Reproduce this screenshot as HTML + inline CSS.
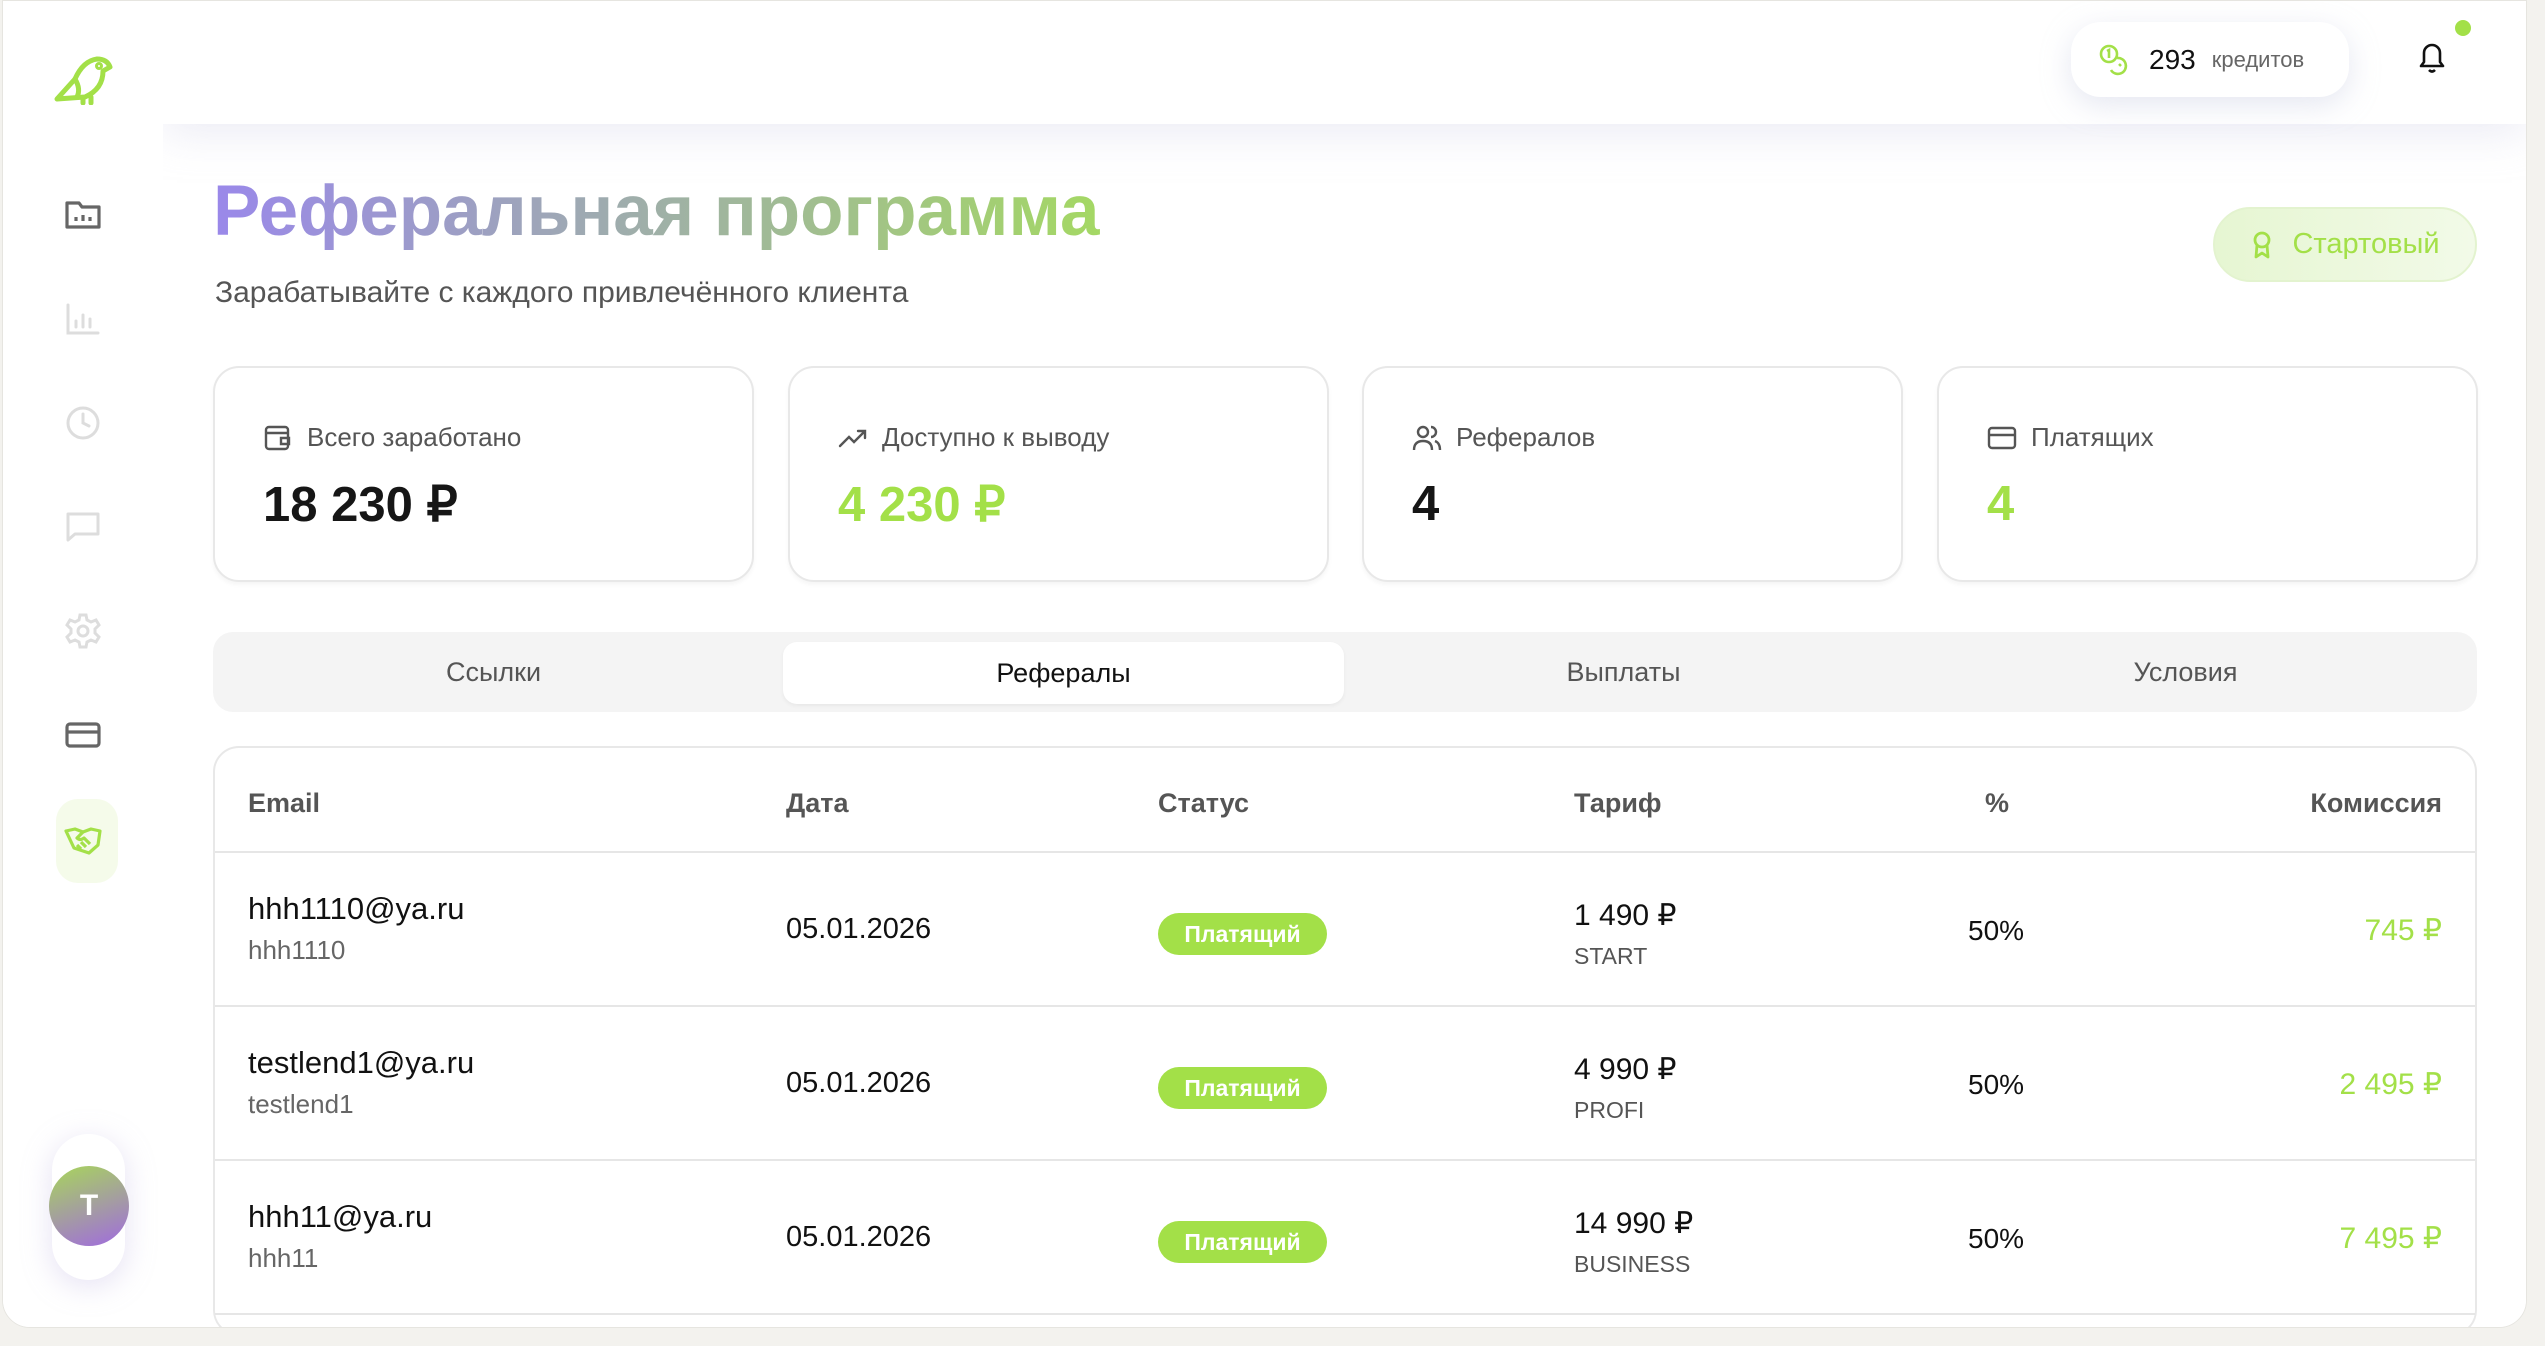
<!DOCTYPE html>
<html><head><meta charset="utf-8"><style>
*{box-sizing:border-box;margin:0;padding:0}
body{width:2545px;height:1346px;overflow:hidden;background:#f3f2ee;font-family:"Liberation Sans","Noto Sans CJK SC",sans-serif;position:relative}
.frame{position:absolute;left:2px;top:0;width:2525px;height:1328px;background:#fff;border-radius:0 0 28px 28px;overflow:hidden;border:1px solid #e6e5e0}
.side{position:absolute;left:0;top:0;width:160px;height:100%;background:#fff}
.main{position:absolute;left:160px;top:0;right:0;bottom:0;background:#fff}
.hdr{position:absolute;left:0;right:0;top:0;height:123px;background:#fff;box-shadow:0 10px 40px rgba(200,200,225,.35)}
.ico{position:absolute;left:60px;width:40px;height:40px}
.a{position:absolute}
.card{position:absolute;top:365px;width:541px;height:216px;border:2px solid #e8e8e8;border-radius:26px;background:#fff;box-shadow:0 3px 4px rgba(0,0,0,.04)}
.card .lb{position:absolute;left:48px;top:54px;font-size:26px;color:#555;display:flex;align-items:center;gap:14px}
.card .v{position:absolute;left:48px;top:108px;font-size:49px;font-weight:bold;color:#161616}
.g{color:#a3e048!important}
.tabs{position:absolute;left:214px;top:631px;width:2264px;height:80px;background:#f4f4f4;border-radius:20px}
.tab{position:absolute;top:0;height:80px;line-height:80px;font-size:27px;color:#555;text-align:center;width:561px}
.tab.on{top:10px;height:62px;line-height:62px;background:#fff;border-radius:14px;color:#111;box-shadow:0 2px 4px rgba(0,0,0,.05)}
.tbl{position:absolute;left:214px;top:745px;width:2264px;height:590px;border:2px solid #e8e8e8;border-radius:26px;background:#fff}
.th{position:absolute;top:40px;font-size:27px;font-weight:bold;color:#555}
.row{position:absolute;left:0;right:0;height:155px;border-top:2px solid #e6e6e6}
.em{position:absolute;left:33px;top:38px;font-size:31px;color:#111}
.sub{position:absolute;left:33px;top:82px;font-size:26px;color:#666}
.dt{position:absolute;left:571px;top:60px;font-size:29px;color:#111}
.bd{position:absolute;left:943px;top:60px;width:169px;height:42px;border-radius:21px;background:#a3e048;color:#fff;font-size:23px;font-weight:bold;text-align:center;line-height:42px}
.pr{position:absolute;left:1359px;top:45px;font-size:30px;color:#111}
.pl{position:absolute;left:1359px;top:90px;font-size:23px;color:#555}
.pc{position:absolute;left:1753px;top:62px;font-size:28px;color:#111}
.cm{position:absolute;right:33px;top:60px;font-size:30px;color:#a3e048}
</style></head><body>
<div class="frame">
<div class="main">
 <div class="hdr"></div>
</div>
<div class="side">
 <svg class="a" style="left:50px;top:48px" width="62" height="56" viewBox="0 0 62 56" fill="none" stroke="#a3e048" stroke-width="5" stroke-linecap="round" stroke-linejoin="round"><path d="M4 50 L22 30 Q30 12 44 10 Q54 10 57 18 L50 22 Q50 40 32 48 L4 50 Z"/><path d="M22 30 Q28 40 24 48"/><circle cx="46" cy="17" r="1.5"/><path d="M30 50v4M38 48v6"/></svg>
 <svg class="ico" style="top:194px" viewBox="0 0 40 40" fill="none" stroke="#666" stroke-width="3.2" stroke-linejoin="round"><path d="M4 8h12l3 4h17v20H4z"/><path d="M13 22v4M20 20v6M27 22v4"/></svg>
 <svg class="ico" style="top:298px" viewBox="0 0 40 40" fill="none" stroke="#ddd" stroke-width="3" stroke-linecap="round"><path d="M5 6v28h30M13 28v-6M20 28v-12M27 28v-8"/></svg>
 <svg class="ico" style="top:402px" viewBox="0 0 40 40" fill="none" stroke="#ddd" stroke-width="3" stroke-linecap="round"><circle cx="20" cy="20" r="15"/><path d="M20 11v9l6 3"/></svg>
 <svg class="ico" style="top:506px" viewBox="0 0 40 40" fill="none" stroke="#ddd" stroke-width="3" stroke-linejoin="round"><path d="M5 7h30v20H12l-7 6z"/></svg>
 <svg class="ico" style="top:610px" viewBox="0 0 40 40" fill="none" stroke="#ddd" stroke-width="3"><circle cx="20" cy="20" r="5"/><path d="M17 4h6l1 5 4 2 5-2 3 5-4 4v4l4 4-3 5-5-2-4 2-1 5h-6l-1-5-4-2-5 2-3-5 4-4v-4l-4-4 3-5 5 2 4-2z"/></svg>
 <svg class="ico" style="top:714px" viewBox="0 0 40 40" fill="none" stroke="#666" stroke-width="3.2"><rect x="4" y="9" width="32" height="22" rx="3"/><path d="M4 17h32"/></svg>
 <div class="a" style="left:53px;top:798px;width:62px;height:84px;border-radius:22px;background:#f5fbea"></div>
 <svg class="ico" style="top:820px" viewBox="0 0 40 40" fill="none" stroke="#a3e048" stroke-width="3.2" stroke-linejoin="round"><path d="M3 10l9-2 8 3 8-3 9 2-2 14-9 8-6-2-9-3z"/><path d="M20 11l-6 6q3 3 7 0l6 6M14 24l4 4M18 21l5 5"/></svg>
 <div class="a" style="left:49px;top:1133px;width:73px;height:146px;border-radius:36px;background:#fff;box-shadow:0 6px 30px rgba(180,170,220,.35)"></div>
 <div class="a" style="left:46px;top:1165px;width:80px;height:80px;border-radius:50%;background:linear-gradient(160deg,#a8d65a,#a06ae0);color:#fff;font-size:30px;font-weight:bold;text-align:center;line-height:80px">T</div>
</div>
<div class="a" style="left:2068px;top:21px;width:278px;height:75px;border-radius:30px;background:#fff;box-shadow:0 8px 30px rgba(180,185,215,.35);display:flex;align-items:center">
 <svg style="margin-left:28px" width="30" height="32" viewBox="0 0 30 32" fill="none" stroke="#a3e048" stroke-width="2.6"><circle cx="10" cy="10" r="8"/><path d="M8 7l2-1v8"/><path d="M18 14a8 8 0 1 1-6 12"/><path d="M20 20l2 2"/></svg>
 <span style="font-size:28px;color:#111;margin-left:20px">293</span><span style="font-size:22px;color:#666;margin-left:16px">кредитов</span>
</div>
<svg class="a" style="left:2414px;top:40px" width="30" height="36" viewBox="0 0 30 36" fill="none" stroke="#111" stroke-width="2.6" stroke-linejoin="round"><path d="M15 4a8 8 0 0 1 8 8v9l3 4H4l3-4v-9a8 8 0 0 1 8-8z"/><path d="M12 29q3 3 6 0"/></svg>
<div class="a" style="left:2452px;top:19px;width:16px;height:16px;border-radius:50%;background:#a3e048"></div>

<div class="a" style="left:210px;top:170px;font-size:71px;font-weight:bold;background:linear-gradient(90deg,#9a88ea,#a4d864);-webkit-background-clip:text;background-clip:text;color:transparent;white-space:nowrap">Реферальная программа</div>
<div class="a" style="left:212px;top:275px;font-size:30px;color:#555">Зарабатывайте с каждого привлечённого клиента</div>
<div class="a" style="left:2210px;top:206px;width:264px;height:75px;border-radius:38px;background:linear-gradient(90deg,#e6f6d2,#f2fae8);border:2px solid #e3f3cf;display:flex;align-items:center;justify-content:center;gap:18px;color:#a3e048;font-size:29px">
 <svg width="24" height="30" viewBox="0 0 24 30" fill="none" stroke="#a3e048" stroke-width="2.8" stroke-linejoin="round"><circle cx="12" cy="10" r="7"/><path d="M7 15l-1 12 6-4 6 4-1-12"/></svg>Стартовый</div>

<div class="card" style="left:210px"><div class="lb"><svg width="30" height="28" viewBox="0 0 30 28" fill="none" stroke="#555" stroke-width="2.4"><rect x="3" y="3" width="22" height="22" rx="3"/><path d="M3 9h22M18 14h8v6h-8z"/></svg>Всего заработано</div><div class="v">18 230 ₽</div></div>
<div class="card" style="left:785px"><div class="lb"><svg width="30" height="24" viewBox="0 0 30 24" fill="none" stroke="#555" stroke-width="2.4" stroke-linecap="round"><path d="M2 20l9-9 5 5 11-11M20 5h7v7"/></svg>Доступно к выводу</div><div class="v g">4 230 ₽</div></div>
<div class="card" style="left:1359px"><div class="lb"><svg width="30" height="28" viewBox="0 0 30 28" fill="none" stroke="#555" stroke-width="2.4"><circle cx="11" cy="8" r="5"/><path d="M2 26q0-9 9-9t9 9M19 3a5 5 0 0 1 0 10M23 17q5 2 5 9"/></svg>Рефералов</div><div class="v">4</div></div>
<div class="card" style="left:1934px"><div class="lb"><svg width="30" height="26" viewBox="0 0 30 26" fill="none" stroke="#555" stroke-width="2.4"><rect x="2" y="3" width="26" height="20" rx="3"/><path d="M2 10h26"/></svg>Платящих</div><div class="v g">4</div></div>

<div class="tabs" style="left:210px">
 <div class="tab" style="left:0">Ссылки</div>
 <div class="tab on" style="left:570px">Рефералы</div>
 <div class="tab" style="left:1130px">Выплаты</div>
 <div class="tab" style="left:1692px">Условия</div>
</div>

<div class="tbl" style="left:210px">
 <div class="th" style="left:33px">Email</div>
 <div class="th" style="left:571px">Дата</div>
 <div class="th" style="left:943px">Статус</div>
 <div class="th" style="left:1359px">Тариф</div>
 <div class="th" style="left:1770px">%</div>
 <div class="th" style="right:33px">Комиссия</div>
 <div class="row" style="top:103px"><div class="em">hhh1110@ya.ru</div><div class="sub">hhh1110</div><div class="dt">05.01.2026</div><div class="bd">Платящий</div><div class="pr">1 490 ₽</div><div class="pl">START</div><div class="pc">50%</div><div class="cm">745 ₽</div></div>
 <div class="row" style="top:257px"><div class="em">testlend1@ya.ru</div><div class="sub">testlend1</div><div class="dt">05.01.2026</div><div class="bd">Платящий</div><div class="pr">4 990 ₽</div><div class="pl">PROFI</div><div class="pc">50%</div><div class="cm">2 495 ₽</div></div>
 <div class="row" style="top:411px"><div class="em">hhh11@ya.ru</div><div class="sub">hhh11</div><div class="dt">05.01.2026</div><div class="bd">Платящий</div><div class="pr">14 990 ₽</div><div class="pl">BUSINESS</div><div class="pc">50%</div><div class="cm">7 495 ₽</div></div>
 <div class="row" style="top:565px"></div>
</div>
</div>
</body></html>
